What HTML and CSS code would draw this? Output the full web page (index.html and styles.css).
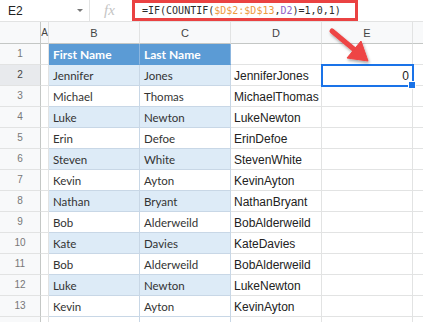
FILE: index.html
```html
<!DOCTYPE html>
<html>
<head>
<meta charset="utf-8">
<link rel="stylesheet" href="styles.css">
</head>
<body>
<div class="page">
  <div class="toolbar">
    <div class="namebox"><span class="ref">E2</span><span class="caret"></span></div>
    <div class="fx">fx</div>
    <div class="formula"><span class="f-dark">=IF(COUNTIF(</span><span class="f-orange">$D$2:$D$13</span><span class="f-dark">,</span><span class="f-purple">D2</span><span class="f-dark">)=1,0,1)</span></div>
  </div>
  <div class="sheet">
    <div class="c corner"></div><div class="c colhead colA">A</div><div class="c colhead">B</div><div class="c colhead">C</div><div class="c colhead">D</div><div class="c colhead">E</div><div class="c colhead last"></div>

    <div class="c rh">1</div><div class="c a"></div><div class="c t th">First Name</div><div class="c t th">Last Name</div><div class="c d"></div><div class="c e"></div><div class="c f"></div>
    <div class="c rh sel">2</div><div class="c a"></div><div class="c t band">Jennifer</div><div class="c t band">Jones</div><div class="c d">JenniferJones</div><div class="c e active">0<span class="handle"></span></div><div class="c f"></div>
    <div class="c rh">3</div><div class="c a"></div><div class="c t">Michael</div><div class="c t">Thomas</div><div class="c d">MichaelThomas</div><div class="c e"></div><div class="c f"></div>
    <div class="c rh">4</div><div class="c a"></div><div class="c t band">Luke</div><div class="c t band">Newton</div><div class="c d">LukeNewton</div><div class="c e"></div><div class="c f"></div>
    <div class="c rh">5</div><div class="c a"></div><div class="c t">Erin</div><div class="c t">Defoe</div><div class="c d">ErinDefoe</div><div class="c e"></div><div class="c f"></div>
    <div class="c rh">6</div><div class="c a"></div><div class="c t band">Steven</div><div class="c t band">White</div><div class="c d">StevenWhite</div><div class="c e"></div><div class="c f"></div>
    <div class="c rh">7</div><div class="c a"></div><div class="c t">Kevin</div><div class="c t">Ayton</div><div class="c d">KevinAyton</div><div class="c e"></div><div class="c f"></div>
    <div class="c rh">8</div><div class="c a"></div><div class="c t band">Nathan</div><div class="c t band">Bryant</div><div class="c d">NathanBryant</div><div class="c e"></div><div class="c f"></div>
    <div class="c rh">9</div><div class="c a"></div><div class="c t">Bob</div><div class="c t">Alderweild</div><div class="c d">BobAlderweild</div><div class="c e"></div><div class="c f"></div>
    <div class="c rh">10</div><div class="c a"></div><div class="c t band">Kate</div><div class="c t band">Davies</div><div class="c d">KateDavies</div><div class="c e"></div><div class="c f"></div>
    <div class="c rh">11</div><div class="c a"></div><div class="c t">Bob</div><div class="c t">Alderweild</div><div class="c d">BobAlderweild</div><div class="c e"></div><div class="c f"></div>
    <div class="c rh">12</div><div class="c a"></div><div class="c t band">Luke</div><div class="c t band">Newton</div><div class="c d">LukeNewton</div><div class="c e"></div><div class="c f"></div>
    <div class="c rh">13</div><div class="c a"></div><div class="c t">Kevin</div><div class="c t">Ayton</div><div class="c d">KevinAyton</div><div class="c e"></div><div class="c f"></div>
    <div class="c rh"></div><div class="c a"></div><div class="c t"></div><div class="c t"></div><div class="c d"></div><div class="c e"></div><div class="c f"></div>
  </div>
  <svg class="arrow" width="423" height="322" viewBox="0 0 423 322">
    <defs>
      <filter id="sh" x="-20%" y="-20%" width="140%" height="140%">
        <feDropShadow dx="1" dy="2" stdDeviation="1.5" flood-color="#000" flood-opacity="0.35"/>
      </filter>
    </defs>
    <g filter="url(#sh)" fill="#ee4444" stroke="#ee4444">
      <line x1="332" y1="31" x2="356" y2="51" stroke-width="5" stroke-linecap="round"/>
      <polygon points="368,61 347,58 361,41" stroke-width="1" stroke-linejoin="round"/>
    </g>
  </svg>
</div>
</body>
</html>
```

FILE: styles.css
```css
html, body {
  margin: 0;
  padding: 0;
  background: #fff;
}

.page {
  position: relative;
  width: 423px;
  height: 322px;
  overflow: hidden;
  font-family: "Liberation Sans", Arial, sans-serif;
}

.toolbar {
  height: 21px;
  border-bottom: 1px solid #e2e3e3;
  display: flex;
  align-items: flex-start;
}

.namebox {
  width: 90px;
  height: 21px;
  box-sizing: border-box;
  border-right: 1px solid #e2e3e3;
  display: flex;
  align-items: center;
  padding-left: 8px;
  padding-right: 6px;
}

.ref {
  font-size: 12px;
  color: #222;
  flex: 1;
}

.caret {
  width: 0;
  height: 0;
  border-left: 3px solid transparent;
  border-right: 3px solid transparent;
  border-top: 3px solid #777;
}

.fx {
  width: 42px;
  padding-left: 14px;
  box-sizing: border-box;
  font-family: "Liberation Serif", "Times New Roman", serif;
  font-style: italic;
  font-size: 15px;
  color: #c4c4c4;
  line-height: 21px;
}

.formula {
  height: 21px;
  width: 226px;
  margin-top: 0;
  box-sizing: border-box;
  border: 3px solid #ea4242;
  display: flex;
  align-items: center;
  padding-left: 7px;
  font-family: "DejaVu Sans Mono", "Liberation Mono", monospace;
  font-size: 10px;
  white-space: nowrap;
  position: relative;
  z-index: 3;
}

.f-dark { color: #2b2b2b; }
.f-orange { color: #ee9a3f; }
.f-purple { color: #9462c8; }

.sheet {
  display: grid;
  grid-template-columns: 41px 8px 91px 91px 91px 91px 1fr;
  grid-template-rows: 22px repeat(14, 21px);
}

.c {
  box-sizing: border-box;
  border-right: 1px solid #e2e3e3;
  border-bottom: 1px solid #e2e3e3;
  display: flex;
  align-items: flex-end;
  padding: 0 3px 2px;
  line-height: 14px;
  white-space: nowrap;
  overflow: visible;
  position: relative;
}

.corner {
  background: #f8f9fa;
  border-right: 1px solid #c4c7c5;
  border-bottom: 1px solid #c4c7c5;
}

.colhead {
  background: #f8f9fa;
  border-bottom: 1px solid #c4c7c5;
  justify-content: center;
  align-items: center;
  padding: 0;
  font-size: 11px;
  color: #444;
}

.colA {
  font-size: 10px;
}

.colhead.last {
  border-right: none;
}

.rh {
  background: #f8f9fa;
  border-right: 1px solid #c4c7c5;
  justify-content: center;
  align-items: center;
  padding: 0;
  font-size: 10px;
  color: #777;
}

.rh.sel {
  background: #e8eaed;
  color: #444;
}

.a {
  padding: 0;
}

.t {
  font-family: Lato, "Open Sans", sans-serif;
  font-size: 11.5px;
  color: #333;
  border-color: #c8d7e6;
  padding-left: 4px;
}

.th {
  background: #5b9bd5;
  color: #fff;
  font-weight: 700;
  font-size: 12px;
  border-right-color: #8cb6df;
  border-bottom-color: #5b9bd5;
}

.band {
  background: #ddebf7;
}

.d {
  font-size: 12px;
  color: #222;
}

.e {
  justify-content: flex-end;
  font-size: 12px;
  color: #222;
}

.f {
  border-right: none;
}

.active {
  outline: 2px solid #1a73e8;
  outline-offset: -1px;
  padding-right: 3px;
  z-index: 2;
}

.handle {
  position: absolute;
  right: -4px;
  bottom: -4px;
  width: 6px;
  height: 6px;
  background: #1a73e8;
  border: 1px solid #fff;
}

.arrow {
  position: absolute;
  left: 0;
  top: 0;
  pointer-events: none;
  z-index: 5;
}
```
